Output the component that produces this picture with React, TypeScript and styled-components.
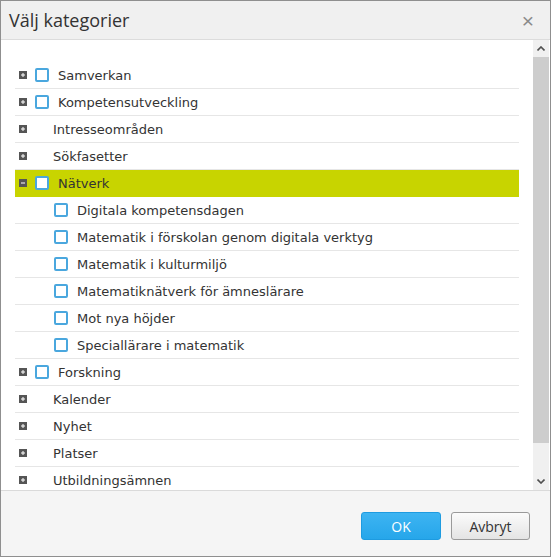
import React, { useState } from 'react';
import styled, { createGlobalStyle } from 'styled-components';

type Node = {
  id: string;
  label: string;
  checkable: boolean;
  children?: Node[];
  open?: boolean;
};

const tree: Node[] = [
  { id: 'samverkan', label: 'Samverkan', checkable: true, children: [] },
  { id: 'kompetens', label: 'Kompetensutveckling', checkable: true, children: [] },
  { id: 'intresse', label: 'Intresseområden', checkable: false, children: [] },
  { id: 'sok', label: 'Sökfasetter', checkable: false, children: [] },
  {
    id: 'natverk',
    label: 'Nätverk',
    checkable: true,
    open: true,
    children: [
      { id: 'digitala', label: 'Digitala kompetensdagen', checkable: true },
      { id: 'forskolan', label: 'Matematik i förskolan genom digitala verktyg', checkable: true },
      { id: 'kultur', label: 'Matematik i kulturmiljö', checkable: true },
      { id: 'amnes', label: 'Matematiknätverk för ämneslärare', checkable: true },
      { id: 'hojder', label: 'Mot nya höjder', checkable: true },
      { id: 'special', label: 'Speciallärare i matematik', checkable: true },
    ],
  },
  { id: 'forskning', label: 'Forskning', checkable: true, children: [] },
  { id: 'kalender', label: 'Kalender', checkable: false, children: [] },
  { id: 'nyhet', label: 'Nyhet', checkable: false, children: [] },
  { id: 'platser', label: 'Platser', checkable: false, children: [] },
  { id: 'utbildning', label: 'Utbildningsämnen', checkable: false, children: [] },
];

const Expander = ({ open }: { open: boolean }) => (
  <ExpanderBox>
    <svg width="8" height="8" viewBox="0 0 8 8">
      <rect width="8" height="8" fill="#555" />
      <rect x="2" y="3.5" width="4" height="1" fill="#fff" />
      {!open && <rect x="3.5" y="2" width="1" height="4" fill="#fff" />}
    </svg>
  </ExpanderBox>
);

const App = () => {
  const [checked, setChecked] = useState<Record<string, boolean>>({});
  const toggle = (id: string) => setChecked({ ...checked, [id]: !checked[id] });

  const renderRow = (node: Node, child: boolean) => (
    <Row key={node.id} $active={node.id === 'natverk'} $child={child}>
      {!child && <Expander open={!!node.open} />}
      {node.checkable && <Check $on={!!checked[node.id]} onClick={() => toggle(node.id)} />}
      <Label $indent={node.checkable ? 9 : 18}>{node.label}</Label>
    </Row>
  );

  return (
    <>
      <GlobalStyle />
      <Dialog>
        <Header>
          <Title>Välj kategorier</Title>
          <Close>×</Close>
        </Header>
        <Body>
          <Pane>
            {tree.map((node) => (
              <React.Fragment key={node.id}>
                {renderRow(node, false)}
                {node.open && node.children?.map((c) => renderRow(c, true))}
              </React.Fragment>
            ))}
          </Pane>
          <ScrollTrack>
            <ScrollButton>
              <svg width="8" height="5" viewBox="0 0 8 5">
                <path d="M0.5 4.5 L4 1 L7.5 4.5" stroke="#505050" strokeWidth="1.6" fill="none" />
              </svg>
            </ScrollButton>
            <Thumb />
            <TrackRest />
            <ScrollButton>
              <svg width="8" height="5" viewBox="0 0 8 5">
                <path d="M0.5 0.5 L4 4 L7.5 0.5" stroke="#505050" strokeWidth="1.6" fill="none" />
              </svg>
            </ScrollButton>
          </ScrollTrack>
        </Body>
        <Footer>
          <PrimaryButton>OK</PrimaryButton>
          <SecondaryButton>Avbryt</SecondaryButton>
        </Footer>
      </Dialog>
    </>
  );
};

export default App;

const GlobalStyle = createGlobalStyle`
  html, body {
    margin: 0;
    padding: 0;
    background: #fff;
  }
  * {
    box-sizing: border-box;
  }
`;

const Dialog = styled.div`
  width: 551px;
  height: 557px;
  border: 1px solid #8f8f8f;
  display: flex;
  flex-direction: column;
  background: #fff;
  font-family: 'DejaVu Sans', Verdana, sans-serif;
  color: #333;
`;

const Header = styled.div`
  height: 39px;
  flex: none;
  background: #f0f0f0;
  border-bottom: 1px solid #dcdcdc;
  display: flex;
  align-items: center;
  justify-content: space-between;
  padding: 0 16px 0 8px;
`;

const Title = styled.h1`
  margin: 0;
  font-family: 'Open Sans', 'Liberation Sans', sans-serif;
  font-weight: 400;
  font-size: 18px;
  color: #333;
`;

const Close = styled.span`
  font-family: 'Liberation Sans', sans-serif;
  font-size: 21px;
  color: #8a8a8a;
  line-height: 1;
`;

const Body = styled.div`
  height: 450px;
  flex: none;
  display: flex;
  padding-right: 1px;
  overflow: hidden;
`;

const Pane = styled.div`
  flex: 1;
  padding: 22px 14px 0;
  overflow: hidden;
`;

const Row = styled.div<{ $active: boolean; $child: boolean }>`
  height: 27px;
  display: flex;
  align-items: center;
  padding-left: ${(p) => (p.$child ? 39 : 4)}px;
  border-bottom: 1px solid ${(p) => (p.$active ? '#c8d400' : '#e6e6e6')};
  background: ${(p) => (p.$active ? '#c8d400' : 'transparent')};
  font-size: 13px;
`;

const ExpanderBox = styled.span`
  display: flex;
  width: 8px;
  height: 8px;
  margin-right: 8px;
`;

const Check = styled.span<{ $on: boolean }>`
  width: 14px;
  height: 14px;
  flex: none;
  border: 2px solid #4aa7de;
  border-radius: 2px;
  background: ${(p) => (p.$on ? '#4aa7de' : '#fff')};
  cursor: pointer;
`;

const Label = styled.span<{ $indent: number }>`
  margin-left: ${(p) => p.$indent}px;
  white-space: nowrap;
`;

const ScrollTrack = styled.div`
  width: 16px;
  flex: none;
  display: flex;
  flex-direction: column;
  background: #f0f0f0;
`;

const ScrollButton = styled.div`
  height: 17px;
  display: flex;
  align-items: center;
  justify-content: center;
`;

const Thumb = styled.div`
  height: 386px;
  background: #cdcdcd;
`;

const TrackRest = styled.div`
  flex: 1;
`;

const Footer = styled.div`
  flex: 1;
  border-top: 1px solid #dadada;
  background: #f5f5f5;
  display: flex;
  justify-content: flex-end;
  align-items: flex-start;
  gap: 10px;
  padding: 21px 20px 0 0;
`;

const BaseButton = styled.button`
  height: 28px;
  border-radius: 3px;
  font-family: 'Open Sans', 'Liberation Sans', sans-serif;
  font-size: 14px;
  padding: 0;
  cursor: pointer;
`;

const PrimaryButton = styled(BaseButton)`
  width: 80px;
  border: 1px solid #1e9be0;
  background: linear-gradient(#3db4f2, #26a6ea);
  color: #fff;
`;

const SecondaryButton = styled(BaseButton)`
  width: 79px;
  border: 1px solid #9a9a9a;
  background: linear-gradient(#fbfbfb, #e4e4e4);
  color: #333;
`;
